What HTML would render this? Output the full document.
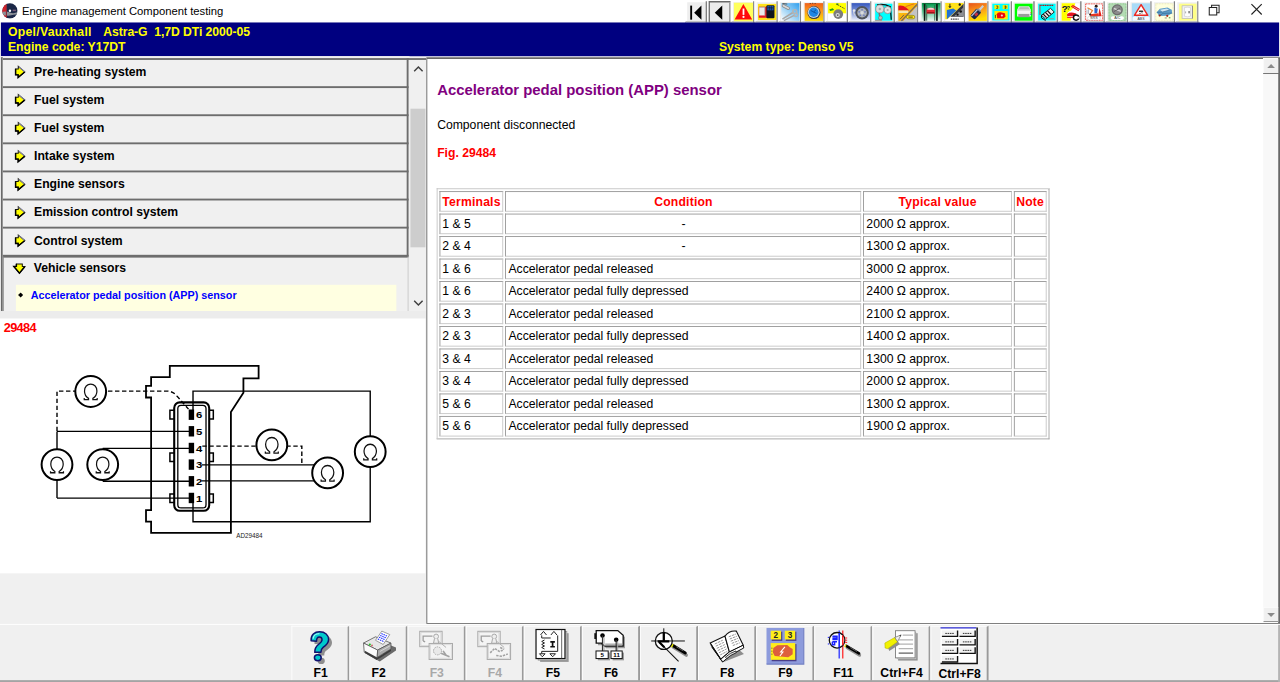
<!DOCTYPE html>
<html>
<head>
<meta charset="utf-8">
<title>Engine management Component testing</title>
<style>
*{box-sizing:border-box;margin:0;padding:0}
html,body{width:1280px;height:682px;overflow:hidden;background:#f0f0f0;font-family:"Liberation Sans",sans-serif}
#app{position:absolute;left:0;top:0;width:1366px;height:728px;transform:scale(0.93704,0.93681);transform-origin:0 0;background:#f0f0f0;overflow:hidden}
.abs{position:absolute}
#titlebar{left:0;top:0;width:1366px;height:24px;background:#fff}
#title{left:23.5px;top:4.5px;font-size:12px;color:#000;white-space:pre}
#navy{left:1px;top:23.7px;width:1363.5px;height:36px;background:#000080}
.hd{color:#ffff00;font-weight:bold;font-size:13px;white-space:pre;line-height:16px}
#acc{left:0;top:60px;width:437px;height:273px;background:#f0f0f0}
.item{position:absolute;left:2.8px;width:433.2px;height:30px;background:#f0f0f0;border-top:2.2px solid #6d6d6d}
.item span{position:absolute;left:33.5px;top:4.7px;font-size:13px;font-weight:bold;color:#000;white-space:pre;line-height:16px}
.item svg{position:absolute;left:12.3px;top:5.3px}
#pane{left:454.6px;top:61px;width:911.4px;height:605px;background:#fff;border-top:2px solid #696969;border-left:1.3px solid #696969;border-bottom:1.5px solid #696969;border-right:2.5px solid #696969}
#h1{left:466.5px;top:86.5px;font-size:15.9px;font-weight:bold;color:#800080;white-space:pre}
#p1{left:466.5px;top:126px;font-size:13px;color:#000;white-space:pre}
#p2{left:466.5px;top:156px;font-size:13px;font-weight:bold;color:#ff0000;white-space:pre}
table#t{position:absolute;left:465.9px;top:200.8px;border-collapse:separate;border-spacing:2px;border:1px solid;border-color:#c6c6c6 #a6a6a6 #a6a6a6 #c6c6c6;table-layout:fixed;width:654px;font-size:13px;background:#fff}
#t td,#t th{height:22px;border:1px solid;border-color:#9a9a9a #c8c8c8 #c8c8c8 #9a9a9a;padding:1.4px 0 0 2.2px;line-height:18.6px;white-space:pre;overflow:hidden;text-align:left;font-weight:normal;color:#000}
#t th{color:#ff0000;font-weight:bold;text-align:center;padding:2px 0 0 0;line-height:18px;letter-spacing:0.2px}
#t td.c{text-align:center;padding:1.4px 0 0 0}
#bt{left:0;top:665.5px;width:1366px;height:63px;background:#f0f0f0;border-top:1.2px solid #ffffff}
.fb{position:absolute;top:1.5px;width:62px;height:61px;border-left:1.5px solid #fdfdfd;border-top:1.5px solid #fdfdfd;border-right:2px solid #9a9a9a;border-bottom:2px solid #9a9a9a;background:#f0f0f0}
.fb b{position:absolute;left:0.6px;width:59px;top:41.5px;text-align:center;font-size:13px;color:#000;line-height:16px;white-space:pre}
.fb.dis b{color:#a8a8a8}
.fb svg{position:absolute;left:12.5px;top:4.5px}
.tb{position:absolute;top:1.3px;width:22px;height:22.5px}
</style>
</head>
<body>
<div id="app">
<div id="titlebar" class="abs">
  <svg class="abs" style="left:1.6px;top:2.6px" width="17.2" height="17.2" viewBox="0 0 17 17">
    <defs><clipPath id="apc"><circle cx="8.5" cy="8.5" r="8"/></clipPath></defs>
    <circle cx="8.5" cy="8.5" r="8" fill="#1b2747"/>
    <g clip-path="url(#apc)"><rect x="0" y="0" width="5" height="17" fill="#d4222a"/>
    <path d="M0 9.6Q5 8.6 8.5 10.2T17 9.8V12.2Q12 12.8 8.5 13.4T0 12.2Z" fill="#8c9198"/>
    <path d="M4.2 0L5.4 0V17H4.2Z" fill="#8a2a3a"/></g>
    <circle cx="8.5" cy="8.3" r="1.3" fill="#ffffff"/><rect x="11.4" y="7.2" width="3.4" height="1.6" fill="#7a5a78"/>
  </svg>
  <div id="title" class="abs">Engine management Component testing</div>
  <svg width="0" height="0" style="position:absolute"><defs>
<linearGradient id="gWr" x1="1" y1="0" x2="0" y2="1"><stop offset="0" stop-color="#2f9fee"/><stop offset="0.55" stop-color="#9fd4f6"/><stop offset="1" stop-color="#ffffff"/></linearGradient>
<linearGradient id="gOr" x1="0" y1="0" x2="0" y2="1"><stop offset="0" stop-color="#f0601a"/><stop offset="0.55" stop-color="#fba51a"/><stop offset="1" stop-color="#ffdc00"/></linearGradient>
<linearGradient id="gBl" x1="0" y1="0" x2="0" y2="1"><stop offset="0" stop-color="#3456bd"/><stop offset="0.6" stop-color="#95a8e0"/><stop offset="1" stop-color="#f2f4fb"/></linearGradient>
<linearGradient id="gGr" x1="0" y1="0" x2="0" y2="1"><stop offset="0" stop-color="#009c4c"/><stop offset="0.5" stop-color="#6cc99a"/><stop offset="1" stop-color="#eefaf3"/></linearGradient>
<linearGradient id="gYo" x1="0" y1="0" x2="1" y2="1"><stop offset="0" stop-color="#ffd800"/><stop offset="1" stop-color="#f58a1a"/></linearGradient>
<linearGradient id="gKey" x1="0" y1="0" x2="0.3" y2="1"><stop offset="0" stop-color="#e8501a"/><stop offset="0.6" stop-color="#fba51a"/><stop offset="1" stop-color="#ffde00"/></linearGradient>
</defs></svg><div class="abs" style="left:731px;top:23.4px;width:549px;height:1.3px;background:#b8b8c4"></div><svg class="tb" style="left:732.30px;width:22.6px;height:23.4px" width="22.6" height="23.4" viewBox="0 0 22.6 23.4" font-family="Liberation Sans, sans-serif"><rect x="0" y="0" width="22.6" height="23.4" fill="#eeeeee"/><path d="M0.7 23.4V0.6H22.6" fill="none" stroke="#ffffff" stroke-width="1.4"/><path d="M0 22.4H22.6" stroke="#c2c2c2" stroke-width="2"/><path d="M21.85 0.4V23.4" stroke="#828282" stroke-width="1.5"/><rect x="4.6" y="5" width="2" height="15" fill="#000"/><path d="M8.8 12.5L16.6 5V20Z" fill="#000"/></svg><svg class="tb" style="left:756.20px;width:23.6px;height:23.4px" width="23.6" height="23.4" viewBox="0 0 23.6 23.4" font-family="Liberation Sans, sans-serif"><rect x="0" y="0" width="23.6" height="23.4" fill="#ececec"/><path d="M0.8 23.4V0.8H23.6" fill="none" stroke="#6a6a6a" stroke-width="1.6"/><path d="M22.900000000000002 1.6V22.7H1.6" fill="none" stroke="#8c8c8c" stroke-width="1.4"/><path d="M6.8 12.5L14.8 5V20Z" fill="#000"/></svg><svg class="tb" style="left:781.30px;width:24.2px;height:23.4px" width="24.2" height="23.4" viewBox="0 0 24.2 23.4" font-family="Liberation Sans, sans-serif"><rect x="0" y="0" width="24.2" height="23.4" fill="#eeeeee"/><path d="M0.7 23.4V0.6H24.2" fill="none" stroke="#ffffff" stroke-width="1.4"/><path d="M0 22.4H24.2" stroke="#c2c2c2" stroke-width="2"/><path d="M23.45 0.4V23.4" stroke="#828282" stroke-width="1.5"/><g transform="translate(1.9 1.5) scale(1.045 1.03)"><rect x="0.3" y="0.4" width="19.5" height="19.2" fill="#ffff5c"/><path d="M10 1.6L19 17.8H1Z" fill="#ff0a0a"/><rect x="9.2" y="6.4" width="1.8" height="6.6" fill="#fff"/><circle cx="10.1" cy="15.1" r="1.1" fill="#fff"/></g></svg><svg class="tb" style="left:806.23px;width:24.2px;height:23.4px" width="24.2" height="23.4" viewBox="0 0 24.2 23.4" font-family="Liberation Sans, sans-serif"><rect x="0" y="0" width="24.2" height="23.4" fill="#eeeeee"/><path d="M0.7 23.4V0.6H24.2" fill="none" stroke="#ffffff" stroke-width="1.4"/><path d="M0 22.4H24.2" stroke="#c2c2c2" stroke-width="2"/><path d="M23.45 0.4V23.4" stroke="#828282" stroke-width="1.5"/><g transform="translate(1.9 1.5) scale(1.045 1.03)"><rect x="1" y="1.6" width="18.6" height="16.8" fill="#ffe21a"/><path d="M1.8 4.5H12L13 16H1.8Z" fill="#e31b23"/><rect x="2.2" y="5" width="5.8" height="8.6" fill="#ececec"/><path d="M2.2 5H8V13.6" fill="none" stroke="#9a9a9a" stroke-width="0.7"/><rect x="9.6" y="3" width="8.2" height="13.4" rx="1" fill="#10151f"/><rect x="10.6" y="4" width="6.2" height="4.2" fill="#1f62d6"/><path d="M10.6 5.4H16.8M10.6 6.8H16.8M12.6 4V8.2M14.7 4V8.2" stroke="#10151f" stroke-width="0.6"/></g></svg><svg class="tb" style="left:831.16px;width:24.2px;height:23.4px" width="24.2" height="23.4" viewBox="0 0 24.2 23.4" font-family="Liberation Sans, sans-serif"><rect x="0" y="0" width="24.2" height="23.4" fill="#eeeeee"/><path d="M0.7 23.4V0.6H24.2" fill="none" stroke="#ffffff" stroke-width="1.4"/><path d="M0 22.4H24.2" stroke="#c2c2c2" stroke-width="2"/><path d="M23.45 0.4V23.4" stroke="#828282" stroke-width="1.5"/><g transform="translate(1.9 1.5) scale(1.045 1.03)"><rect x="0.8" y="0.8" width="18.6" height="18.4" fill="url(#gWr)"/><path d="M3 3.5L8 6.2" stroke="#8a8a8a" stroke-width="3.4" stroke-linecap="round"/><path d="M3 3.5L8 6.2" stroke="#d8d8d8" stroke-width="1.8" stroke-linecap="round"/><path d="M2 17.5L13.5 10M3.5 19L15 13" stroke="#a8a8a8" stroke-width="1.6"/><circle cx="14.6" cy="9.6" r="2.1" fill="none" stroke="#b4b4b4" stroke-width="1.4"/><circle cx="15.8" cy="13" r="1.8" fill="none" stroke="#b4b4b4" stroke-width="1.3"/><path d="M2 1.2L7 1.8" stroke="#555" stroke-width="1"/></g></svg><svg class="tb" style="left:856.09px;width:24.2px;height:23.4px" width="24.2" height="23.4" viewBox="0 0 24.2 23.4" font-family="Liberation Sans, sans-serif"><rect x="0" y="0" width="24.2" height="23.4" fill="#eeeeee"/><path d="M0.7 23.4V0.6H24.2" fill="none" stroke="#ffffff" stroke-width="1.4"/><path d="M0 22.4H24.2" stroke="#c2c2c2" stroke-width="2"/><path d="M23.45 0.4V23.4" stroke="#828282" stroke-width="1.5"/><g transform="translate(1.9 1.5) scale(1.045 1.03)"><rect x="0.8" y="0.8" width="18.8" height="18.4" fill="url(#gOr)"/><circle cx="10.3" cy="10.6" r="6.7" fill="#3a3f48"/><circle cx="10" cy="10.3" r="6" fill="#c9d2dc"/><circle cx="10" cy="10.3" r="4.9" fill="#1f86e4"/><path d="M7 8.5L13 11.5M10 10L12.5 7.5" stroke="#0c4f9c" stroke-width="0.9"/><path d="M6 1.2h1M8.5 1h1M11 1.2h1" stroke="#222" stroke-width="0.7"/></g></svg><svg class="tb" style="left:881.02px;width:24.2px;height:23.4px" width="24.2" height="23.4" viewBox="0 0 24.2 23.4" font-family="Liberation Sans, sans-serif"><rect x="0" y="0" width="24.2" height="23.4" fill="#eeeeee"/><path d="M0.7 23.4V0.6H24.2" fill="none" stroke="#ffffff" stroke-width="1.4"/><path d="M0 22.4H24.2" stroke="#c2c2c2" stroke-width="2"/><path d="M23.45 0.4V23.4" stroke="#828282" stroke-width="1.5"/><g transform="translate(1.9 1.5) scale(1.045 1.03)"><rect x="0.8" y="0.8" width="18.4" height="18.4" fill="#fff"/><rect x="0.8" y="0.8" width="18.4" height="10.6" fill="#ffff00"/><circle cx="11.2" cy="12.2" r="5" fill="#7d7d7d"/><circle cx="10.6" cy="13.2" r="2.2" fill="#d9d9d9"/><circle cx="10.6" cy="13.2" r="0.9" fill="#555"/><path d="M2 7.5L5.5 6L7 8L3 9Z" fill="#1d9a1d"/><path d="M9.5 2L17.5 6.5" stroke="#333" stroke-width="0.9" stroke-dasharray="1.2 0.8"/><rect x="9.3" y="1.2" width="2" height="1.4" fill="#1d7a1d"/></g></svg><svg class="tb" style="left:905.95px;width:24.2px;height:23.4px" width="24.2" height="23.4" viewBox="0 0 24.2 23.4" font-family="Liberation Sans, sans-serif"><rect x="0" y="0" width="24.2" height="23.4" fill="#eeeeee"/><path d="M0.7 23.4V0.6H24.2" fill="none" stroke="#ffffff" stroke-width="1.4"/><path d="M0 22.4H24.2" stroke="#c2c2c2" stroke-width="2"/><path d="M23.45 0.4V23.4" stroke="#828282" stroke-width="1.5"/><g transform="translate(1.9 1.5) scale(1.045 1.03)"><rect x="0.8" y="0.8" width="18.8" height="18.4" fill="url(#gBl)"/><circle cx="11.6" cy="10.8" r="6.9" fill="#50545c"/><circle cx="11.6" cy="10.8" r="4.9" fill="#aeb3bb"/><circle cx="11.6" cy="10.8" r="1.7" fill="#d8dbe0"/><g fill="#6d7ec0"><circle cx="11.6" cy="7.6" r="0.9"/><circle cx="14.6" cy="9.8" r="0.9"/><circle cx="13.5" cy="13.4" r="0.9"/><circle cx="9.7" cy="13.4" r="0.9"/><circle cx="8.6" cy="9.8" r="0.9"/></g><path d="M3.5 8Q2 11 4.5 13.5" fill="none" stroke="#cfd3da" stroke-width="1.1"/><circle cx="3.4" cy="8.4" r="1.3" fill="#e4e6ea"/></g></svg><svg class="tb" style="left:930.88px;width:24.2px;height:23.4px" width="24.2" height="23.4" viewBox="0 0 24.2 23.4" font-family="Liberation Sans, sans-serif"><rect x="0" y="0" width="24.2" height="23.4" fill="#eeeeee"/><path d="M0.7 23.4V0.6H24.2" fill="none" stroke="#ffffff" stroke-width="1.4"/><path d="M0 22.4H24.2" stroke="#c2c2c2" stroke-width="2"/><path d="M23.45 0.4V23.4" stroke="#828282" stroke-width="1.5"/><g transform="translate(1.9 1.5) scale(1.045 1.03)"><rect x="1" y="1.4" width="17.6" height="17.6" fill="#00ffff"/><path d="M3 2.5Q10 1 16.5 4.5L17.5 18" fill="none" stroke="#111" stroke-width="1.3"/><circle cx="5.8" cy="6.8" r="4.2" fill="#dcdcdc" stroke="#8a8a8a" stroke-width="0.8"/><circle cx="13.8" cy="8" r="3.7" fill="#e4e4e4" stroke="#8a8a8a" stroke-width="0.8"/><circle cx="5.8" cy="6.8" r="1.3" fill="#aaa"/><circle cx="13.8" cy="8" r="1.1" fill="#aaa"/><path d="M5 11L6.5 17" stroke="#777" stroke-width="1.6"/><circle cx="6.4" cy="16" r="2" fill="#bdbdbd" stroke="#666" stroke-width="0.6"/><path d="M1 18.6H8" stroke="#e06a5a" stroke-width="0.8"/></g></svg><svg class="tb" style="left:955.81px;width:24.2px;height:23.4px" width="24.2" height="23.4" viewBox="0 0 24.2 23.4" font-family="Liberation Sans, sans-serif"><rect x="0" y="0" width="24.2" height="23.4" fill="#eeeeee"/><path d="M0.7 23.4V0.6H24.2" fill="none" stroke="#ffffff" stroke-width="1.4"/><path d="M0 22.4H24.2" stroke="#c2c2c2" stroke-width="2"/><path d="M23.45 0.4V23.4" stroke="#828282" stroke-width="1.5"/><g transform="translate(1.9 1.5) scale(1.045 1.03)"><rect x="0.8" y="0.8" width="19" height="18.4" fill="#c4c4c4"/><path d="M0.8 0.8H19.8V4L6 19.2H0.8Z" fill="url(#gYo)"/><path d="M0.8 3.5Q5 2.5 9 5.5L12 8.5H0.8Z" fill="#e3141e"/><path d="M0.8 8.5H11V11H0.8Z" fill="#f4e6b0"/><path d="M4 19.2L19.8 2" stroke="#666" stroke-width="1.2"/><path d="M8 4.5L17 1.5" stroke="#e05a1a" stroke-width="0.8"/><rect x="9" y="13.5" width="8.6" height="3.6" rx="1.8" fill="#ffe81a" stroke="#776a00" stroke-width="0.6"/><path d="M11 15.3h4.5" stroke="#554c00" stroke-width="1"/><path d="M2.5 17.5L6.5 13" stroke="#555" stroke-width="0.9"/></g></svg><svg class="tb" style="left:980.74px;width:24.2px;height:23.4px" width="24.2" height="23.4" viewBox="0 0 24.2 23.4" font-family="Liberation Sans, sans-serif"><rect x="0" y="0" width="24.2" height="23.4" fill="#eeeeee"/><path d="M0.7 23.4V0.6H24.2" fill="none" stroke="#ffffff" stroke-width="1.4"/><path d="M0 22.4H24.2" stroke="#c2c2c2" stroke-width="2"/><path d="M23.45 0.4V23.4" stroke="#828282" stroke-width="1.5"/><g transform="translate(1.9 1.5) scale(1.045 1.03)"><rect x="0.8" y="0.8" width="19" height="18.4" fill="url(#gGr)"/><rect x="2.8" y="1.2" width="1.7" height="18" fill="#0b1a10"/><rect x="15.4" y="1.2" width="1.7" height="18" fill="#0b1a10"/><rect x="5.4" y="3" width="0.9" height="16" fill="#2a5a3e"/><rect x="13.6" y="3" width="0.9" height="16" fill="#2a5a3e"/><path d="M5.6 7.2Q10 4.2 14.4 7.2V11.6H5.6Z" fill="#e62a34"/><path d="M6.4 6.6Q10 4.6 13.6 6.6L13.4 7.6H6.6Z" fill="#f6d8da"/><rect x="6.2" y="10.2" width="7.6" height="1.2" fill="#8a1118"/><rect x="1.6" y="0.8" width="17.4" height="1" fill="#0b6c38"/></g></svg><svg class="tb" style="left:1005.67px;width:24.2px;height:23.4px" width="24.2" height="23.4" viewBox="0 0 24.2 23.4" font-family="Liberation Sans, sans-serif"><rect x="0" y="0" width="24.2" height="23.4" fill="#eeeeee"/><path d="M0.7 23.4V0.6H24.2" fill="none" stroke="#ffffff" stroke-width="1.4"/><path d="M0 22.4H24.2" stroke="#c2c2c2" stroke-width="2"/><path d="M23.45 0.4V23.4" stroke="#828282" stroke-width="1.5"/><g transform="translate(1.9 1.5) scale(1.045 1.03)"><rect x="0.8" y="0.8" width="18.8" height="18.4" fill="#fff"/><path d="M0.8 0.8H19.6V2L3 17.5H0.8Z" fill="#ffe21a"/><path d="M2.5 8L9 6.5L12 8.5L2.5 17.5Z" fill="#2272d4"/><path d="M19.6 1.5V15H6Z" fill="#33363c"/><path d="M19.6 5L10 14.5H19.6Z" fill="#8c8f95"/><circle cx="16.6" cy="9.6" r="1.3" fill="#111"/><circle cx="13.4" cy="12.8" r="1.2" fill="#111"/><path d="M5.6 1.5V5M4.6 4L5.6 5.6L6.6 4M15.6 1.2V3" stroke="#111" stroke-width="0.9" fill="none"/><circle cx="15.6" cy="2.4" r="1.2" fill="#111"/><path d="M6.5 17.4h8" stroke="#444" stroke-width="1.4" stroke-dasharray="1.6 0.7"/></g></svg><svg class="tb" style="left:1030.60px;width:24.2px;height:23.4px" width="24.2" height="23.4" viewBox="0 0 24.2 23.4" font-family="Liberation Sans, sans-serif"><rect x="0" y="0" width="24.2" height="23.4" fill="#eeeeee"/><path d="M0.7 23.4V0.6H24.2" fill="none" stroke="#ffffff" stroke-width="1.4"/><path d="M0 22.4H24.2" stroke="#c2c2c2" stroke-width="2"/><path d="M23.45 0.4V23.4" stroke="#828282" stroke-width="1.5"/><g transform="translate(1.9 1.5) scale(1.045 1.03)"><rect x="0.8" y="0.8" width="18.6" height="18.4" fill="url(#gKey)"/><g transform="rotate(-48 9 11)"><rect x="2.4" y="7.8" width="10.4" height="6.4" rx="1.6" fill="#1b2748"/><rect x="3" y="8.6" width="9.2" height="1.3" fill="#b8c0d0"/><rect x="12.8" y="9.9" width="6.2" height="2.2" fill="#c9ced6"/><rect x="6" y="10.4" width="3.4" height="2.6" fill="#c73040"/><rect x="12" y="9" width="1.6" height="4" fill="#8d95a6"/></g></g></svg><svg class="tb" style="left:1055.53px;width:24.2px;height:23.4px" width="24.2" height="23.4" viewBox="0 0 24.2 23.4" font-family="Liberation Sans, sans-serif"><rect x="0" y="0" width="24.2" height="23.4" fill="#eeeeee"/><path d="M0.7 23.4V0.6H24.2" fill="none" stroke="#ffffff" stroke-width="1.4"/><path d="M0 22.4H24.2" stroke="#c2c2c2" stroke-width="2"/><path d="M23.45 0.4V23.4" stroke="#828282" stroke-width="1.5"/><g transform="translate(1.9 1.5) scale(1.045 1.03)"><rect x="1" y="1.4" width="17.6" height="17.4" fill="#00ffff"/><rect x="3.2" y="2.8" width="5.2" height="4.2" fill="#ffee00"/><rect x="11.6" y="2.8" width="5.2" height="4.2" fill="#ffee00"/><path d="M5 3.8h1.6v2.4h-1.6M13.6 3.8h1.4v1.1h-1.4M15 4.9v1.3h-1.4" stroke="#222" stroke-width="0.7" fill="none"/><rect x="3.2" y="9" width="13.6" height="8.8" fill="#ffee00"/><path d="M5.6 12.4Q6 10.2 9.4 10.4L13.8 11.4L14.6 14.8L12.6 16.6H6Z" fill="#ee0a0a"/><circle cx="10.8" cy="13.6" r="1.1" fill="#f7d0d0"/><path d="M4.2 13v3.4" stroke="#222" stroke-width="0.8"/></g></svg><svg class="tb" style="left:1080.46px;width:24.2px;height:23.4px" width="24.2" height="23.4" viewBox="0 0 24.2 23.4" font-family="Liberation Sans, sans-serif"><rect x="0" y="0" width="24.2" height="23.4" fill="#eeeeee"/><path d="M0.7 23.4V0.6H24.2" fill="none" stroke="#ffffff" stroke-width="1.4"/><path d="M0 22.4H24.2" stroke="#c2c2c2" stroke-width="2"/><path d="M23.45 0.4V23.4" stroke="#828282" stroke-width="1.5"/><g transform="translate(1.9 1.5) scale(1.045 1.03)"><rect x="1" y="1.4" width="18.2" height="17.6" fill="#00ff00"/><path d="M5.2 4.2H15.6L17.4 8V14.6H3.4V8Z" fill="#f4f4f4"/><path d="M5.2 4.2H15.6L17.4 8H3.4Z" fill="#dadada"/><path d="M6 5.2h9M5.6 6.4h10" stroke="#a8a8a8" stroke-width="0.7"/><rect x="4.6" y="12" width="11.4" height="3.4" fill="#9c9c9c"/><path d="M3.4 8H17.4" stroke="#bdbdbd" stroke-width="0.7"/><rect x="17" y="10.4" width="1.2" height="0.9" fill="#e02020"/><rect x="17" y="12" width="1.2" height="0.9" fill="#2030d0"/></g></svg><svg class="tb" style="left:1105.39px;width:24.2px;height:23.4px" width="24.2" height="23.4" viewBox="0 0 24.2 23.4" font-family="Liberation Sans, sans-serif"><rect x="0" y="0" width="24.2" height="23.4" fill="#eeeeee"/><path d="M0.7 23.4V0.6H24.2" fill="none" stroke="#ffffff" stroke-width="1.4"/><path d="M0 22.4H24.2" stroke="#c2c2c2" stroke-width="2"/><path d="M23.45 0.4V23.4" stroke="#828282" stroke-width="1.5"/><g transform="translate(1.9 1.5) scale(1.045 1.03)"><rect x="1" y="1.4" width="17.8" height="17.4" fill="#00ffff"/><path d="M2.4 3.2h14" stroke="#b01818" stroke-width="1.3" stroke-dasharray="1.3 0.5"/><path d="M2.8 3.6V13" stroke="#e02020" stroke-width="0.9"/><path d="M4.4 13.4L13.6 6.2L17.4 10L8.6 17.4Z" fill="#f2f2f2" stroke="#111" stroke-width="0.9"/><path d="M6.2 12.2L9.6 15.8M8.4 10.4L11.8 14M10.6 8.8L14 12.4" stroke="#111" stroke-width="1.3"/><path d="M4.4 13.4V16L8.6 19" stroke="#111" stroke-width="1" fill="none"/><path d="M12.4 17h4.6" stroke="#e06a5a" stroke-width="0.7"/></g></svg><svg class="tb" style="left:1130.32px;width:24.2px;height:23.4px" width="24.2" height="23.4" viewBox="0 0 24.2 23.4" font-family="Liberation Sans, sans-serif"><rect x="0" y="0" width="24.2" height="23.4" fill="#eeeeee"/><path d="M0.7 23.4V0.6H24.2" fill="none" stroke="#ffffff" stroke-width="1.4"/><path d="M0 22.4H24.2" stroke="#c2c2c2" stroke-width="2"/><path d="M23.45 0.4V23.4" stroke="#828282" stroke-width="1.5"/><g transform="translate(1.9 1.5) scale(1.045 1.03)"><rect x="1" y="1" width="18.4" height="18.2" fill="#fff"/><path d="M1 1H15L10 19.2H1Z" fill="#ffff00"/><path d="M6.4 12.8Q7 9.6 10.4 8.6L14 4.4L19.4 8.4V15.6H7Z" fill="#fff"/><path d="M10.8 4L18.6 8.8M12 3L19.4 7.4" stroke="#e3141e" stroke-width="1.1"/><path d="M6.6 12.2Q9 10.2 13 10.8L16 11.6V14.4H6.6Z" fill="#e3141e"/><path d="M6.6 15.6h7" stroke="#e3141e" stroke-width="1"/><text x="1.2" y="9.6" font-size="10" font-weight="bold" fill="#0a0a3c">?</text><text x="6.2" y="8.2" font-size="5.4" font-weight="bold" fill="#0a0a3c">?</text><circle cx="15.8" cy="15.8" r="2.7" fill="#fff" stroke="#111" stroke-width="1.5"/><rect x="16.6" y="14.9" width="2.4" height="1.8" fill="#fff"/></g></svg><svg class="tb" style="left:1155.25px;width:24.2px;height:23.4px" width="24.2" height="23.4" viewBox="0 0 24.2 23.4" font-family="Liberation Sans, sans-serif"><rect x="0" y="0" width="24.2" height="23.4" fill="#eeeeee"/><path d="M0.7 23.4V0.6H24.2" fill="none" stroke="#ffffff" stroke-width="1.4"/><path d="M0 22.4H24.2" stroke="#c2c2c2" stroke-width="2"/><path d="M23.45 0.4V23.4" stroke="#828282" stroke-width="1.5"/><g transform="translate(1.9 1.5) scale(1.045 1.03)"><rect x="1" y="1" width="18.6" height="18.2" fill="#fff"/><path d="M1.6 1.6H19V18.6H1.6Z" fill="none" stroke="#e2352c" stroke-width="0.8" stroke-dasharray="2 0.6"/><path d="M16.4 1.6Q15 6 16.6 9L18 14.4H14.4Z" fill="#e2241c"/><path d="M6 12.4L14.4 11.4L15.4 14.6H6.4Z" fill="#e6331f"/><path d="M10.6 5.4L14 6.6L13.4 11.4H10.6Z" fill="#2a64c8"/><circle cx="12.4" cy="4" r="1.5" fill="#2b1c16"/><path d="M3.4 5.6L8.6 8.4L6 12.6" fill="none" stroke="#e8843a" stroke-width="1.3"/><path d="M3 7.6V12.4M4.6 6.8V12" stroke="#9aa3b5" stroke-width="0.8"/><circle cx="6.2" cy="12.6" r="1.1" fill="#222"/><rect x="3.6" y="14.6" width="13" height="3.8" rx="1.9" fill="#fff" stroke="#b9b9b9" stroke-width="0.5"/><text x="10.1" y="17.7" font-size="3.8" text-anchor="middle" fill="#333">SRS</text></g></svg><svg class="tb" style="left:1180.18px;width:24.2px;height:23.4px" width="24.2" height="23.4" viewBox="0 0 24.2 23.4" font-family="Liberation Sans, sans-serif"><rect x="0" y="0" width="24.2" height="23.4" fill="#eeeeee"/><path d="M0.7 23.4V0.6H24.2" fill="none" stroke="#ffffff" stroke-width="1.4"/><path d="M0 22.4H24.2" stroke="#c2c2c2" stroke-width="2"/><path d="M23.45 0.4V23.4" stroke="#828282" stroke-width="1.5"/><g transform="translate(1.9 1.5) scale(1.045 1.03)"><rect x="1" y="1" width="18.4" height="18.2" fill="#b4dcb4"/><rect x="1.6" y="1.6" width="17.2" height="17" fill="none" stroke="#86c486" stroke-width="1" stroke-dasharray="0.8 0.8"/><circle cx="10" cy="7.8" r="5.7" fill="#6e6e6e"/><circle cx="10" cy="7.8" r="4.4" fill="#8c8c8c"/><path d="M6.6 6.2L13.6 9.4" stroke="#d5d5d5" stroke-width="1.4"/><path d="M6.6 9.6L13 5.8" stroke="#5c5c5c" stroke-width="0.9"/><rect x="3.4" y="14.4" width="13.4" height="3.8" rx="1.9" fill="#fff"/><text x="10.1" y="17.6" font-size="3.8" text-anchor="middle" fill="#333">A/C</text></g></svg><svg class="tb" style="left:1205.11px;width:24.2px;height:23.4px" width="24.2" height="23.4" viewBox="0 0 24.2 23.4" font-family="Liberation Sans, sans-serif"><rect x="0" y="0" width="24.2" height="23.4" fill="#eeeeee"/><path d="M0.7 23.4V0.6H24.2" fill="none" stroke="#ffffff" stroke-width="1.4"/><path d="M0 22.4H24.2" stroke="#c2c2c2" stroke-width="2"/><path d="M23.45 0.4V23.4" stroke="#828282" stroke-width="1.5"/><g transform="translate(1.9 1.5) scale(1.045 1.03)"><rect x="1" y="1" width="18.6" height="18.2" fill="#a9dbf7"/><path d="M10.4 2.4L17.2 13.4H3.6Z" fill="#fff" stroke="#ea2a22" stroke-width="1.5" stroke-linejoin="round"/><path d="M8.6 8.4h3.4l0.8 1.6H8Z" fill="#333"/><path d="M8.2 11.2q1 1.2 2 0t2 0" stroke="#555" stroke-width="0.7" fill="none"/><path d="M1.6 19.2V15.6Q4 13.6 6 15Q10 13.4 14 15Q17 13.8 19.2 15.6V19.2Z" fill="#f4fafe"/><text x="10.3" y="18.2" font-size="3.6" text-anchor="middle" fill="#333">ABS</text></g></svg><svg class="tb" style="left:1230.04px;width:24.2px;height:23.4px" width="24.2" height="23.4" viewBox="0 0 24.2 23.4" font-family="Liberation Sans, sans-serif"><rect x="0" y="0" width="24.2" height="23.4" fill="#eeeeee"/><path d="M0.7 23.4V0.6H24.2" fill="none" stroke="#ffffff" stroke-width="1.4"/><path d="M0 22.4H24.2" stroke="#c2c2c2" stroke-width="2"/><path d="M23.45 0.4V23.4" stroke="#828282" stroke-width="1.5"/><g transform="translate(1.9 1.5) scale(1.045 1.03)"><rect x="1" y="1" width="18.6" height="18.2" fill="#ffffdc"/><rect x="1.5" y="1.5" width="17.6" height="17.2" fill="none" stroke="#d8d8a8" stroke-width="0.7" stroke-dasharray="0.8 0.8"/><path d="M2.4 10.4L5.6 6.6L13.4 5.4L17.8 7.8L18.2 11.2L13.6 14L5 14.2Z" fill="#5d9cc8"/><path d="M5.8 7.6L12.8 6.4L15.6 8L8.4 10Z" fill="#cfe6f4"/><path d="M2.4 10.4L8.4 10L15.6 8M5 14.2L8.8 11.4L18.2 11.2" stroke="#2a5f88" stroke-width="0.6" fill="none"/><circle cx="5.4" cy="13.6" r="1.1" fill="#a82818"/><circle cx="13.2" cy="14" r="1.1" fill="#a82818"/><rect x="14.8" y="15.6" width="1.6" height="0.9" fill="#1c8a1c"/><path d="M10.6 16.2h2.2" stroke="#666" stroke-width="0.7"/></g></svg><svg class="tb" style="left:1254.97px;width:24.2px;height:23.4px" width="24.2" height="23.4" viewBox="0 0 24.2 23.4" font-family="Liberation Sans, sans-serif"><rect x="0" y="0" width="24.2" height="23.4" fill="#eeeeee"/><path d="M0.7 23.4V0.6H24.2" fill="none" stroke="#ffffff" stroke-width="1.4"/><path d="M0 22.4H24.2" stroke="#c2c2c2" stroke-width="2"/><path d="M23.45 0.4V23.4" stroke="#828282" stroke-width="1.5"/><g transform="translate(1.9 1.5) scale(1.045 1.03)"><rect x="1.4" y="1.4" width="17.8" height="17.6" fill="#ffff86"/><rect x="4.4" y="3.6" width="10.6" height="13.2" fill="#f3f3f3" stroke="#b4b4b4" stroke-width="0.7"/><path d="M6.8 5.4Q10 4.6 13 5.4V14.4Q10 15.6 6.8 14.4Z" fill="#fdfdfd" stroke="#c4c4c4" stroke-width="0.6"/><rect x="11" y="9" width="1.1" height="2.4" fill="#444"/><path d="M8 9.4v2" stroke="#888" stroke-width="0.7"/><path d="M15 3.6V16.8" stroke="#8a8a8a" stroke-width="1"/></g></svg>
  <svg class="abs" style="left:1289px;top:4px" width="14" height="14" viewBox="0 0 14 14" fill="none" stroke="#222" stroke-width="1.1"><rect x="1.5" y="4" width="8" height="8"/><path d="M4 4V1.5h8v8H9.5"/></svg>
  <svg class="abs" style="left:1334px;top:3px" width="14" height="14" viewBox="0 0 14 14" fill="none" stroke="#222" stroke-width="1.2"><path d="M1.5 1.5l11 11M12.5 1.5l-11 11"/></svg>
</div>
<div id="navy" class="abs">
  <div class="abs hd" style="left:7.5px;top:2.8px;letter-spacing:0.32px">Opel/Vauxhall</div>
  <div class="abs hd" style="left:109.2px;top:2.8px;letter-spacing:-0.06px">Astra-G  1,7D DTi 2000-05</div>
  <div class="abs hd" style="left:7.5px;top:18.8px">Engine code: Y17DT</div>
  <div class="abs hd" style="left:766.2px;top:18.8px">System type: Denso V5</div>
</div>
<div id="acc" class="abs">
<div class="abs" style="left:1.3px;top:1px;width:1.6px;height:272px;background:#696969"></div>
<div class="item" style="top:1.9px"><svg width="14" height="16" viewBox="0 0 14 16"><path d="M1.7 4.7H4.5V1.9L11.5 7.75L4.5 13.6V10.8H1.7Z" fill="#ffff00" stroke="#16160a" stroke-width="1.1" stroke-linejoin="miter"/><path d="M1.6 4.4V10.9H4.3V13.7L11.3 7.9" fill="none" stroke="#000" stroke-width="1.5" stroke-linejoin="miter"/><path d="M4.9 2.2L11.2 7.5" stroke="#8a8aa8" stroke-width="1.1" fill="none"/></svg><span>Pre-heating system</span></div>
<div class="item" style="top:31.9px"><svg width="14" height="16" viewBox="0 0 14 16"><path d="M1.7 4.7H4.5V1.9L11.5 7.75L4.5 13.6V10.8H1.7Z" fill="#ffff00" stroke="#16160a" stroke-width="1.1" stroke-linejoin="miter"/><path d="M1.6 4.4V10.9H4.3V13.7L11.3 7.9" fill="none" stroke="#000" stroke-width="1.5" stroke-linejoin="miter"/><path d="M4.9 2.2L11.2 7.5" stroke="#8a8aa8" stroke-width="1.1" fill="none"/></svg><span>Fuel system</span></div>
<div class="item" style="top:61.9px"><svg width="14" height="16" viewBox="0 0 14 16"><path d="M1.7 4.7H4.5V1.9L11.5 7.75L4.5 13.6V10.8H1.7Z" fill="#ffff00" stroke="#16160a" stroke-width="1.1" stroke-linejoin="miter"/><path d="M1.6 4.4V10.9H4.3V13.7L11.3 7.9" fill="none" stroke="#000" stroke-width="1.5" stroke-linejoin="miter"/><path d="M4.9 2.2L11.2 7.5" stroke="#8a8aa8" stroke-width="1.1" fill="none"/></svg><span>Fuel system</span></div>
<div class="item" style="top:91.9px"><svg width="14" height="16" viewBox="0 0 14 16"><path d="M1.7 4.7H4.5V1.9L11.5 7.75L4.5 13.6V10.8H1.7Z" fill="#ffff00" stroke="#16160a" stroke-width="1.1" stroke-linejoin="miter"/><path d="M1.6 4.4V10.9H4.3V13.7L11.3 7.9" fill="none" stroke="#000" stroke-width="1.5" stroke-linejoin="miter"/><path d="M4.9 2.2L11.2 7.5" stroke="#8a8aa8" stroke-width="1.1" fill="none"/></svg><span>Intake system</span></div>
<div class="item" style="top:121.9px"><svg width="14" height="16" viewBox="0 0 14 16"><path d="M1.7 4.7H4.5V1.9L11.5 7.75L4.5 13.6V10.8H1.7Z" fill="#ffff00" stroke="#16160a" stroke-width="1.1" stroke-linejoin="miter"/><path d="M1.6 4.4V10.9H4.3V13.7L11.3 7.9" fill="none" stroke="#000" stroke-width="1.5" stroke-linejoin="miter"/><path d="M4.9 2.2L11.2 7.5" stroke="#8a8aa8" stroke-width="1.1" fill="none"/></svg><span>Engine sensors</span></div>
<div class="item" style="top:151.9px"><svg width="14" height="16" viewBox="0 0 14 16"><path d="M1.7 4.7H4.5V1.9L11.5 7.75L4.5 13.6V10.8H1.7Z" fill="#ffff00" stroke="#16160a" stroke-width="1.1" stroke-linejoin="miter"/><path d="M1.6 4.4V10.9H4.3V13.7L11.3 7.9" fill="none" stroke="#000" stroke-width="1.5" stroke-linejoin="miter"/><path d="M4.9 2.2L11.2 7.5" stroke="#8a8aa8" stroke-width="1.1" fill="none"/></svg><span>Emission control system</span></div>
<div class="item" style="top:181.9px"><svg width="14" height="16" viewBox="0 0 14 16"><path d="M1.7 4.7H4.5V1.9L11.5 7.75L4.5 13.6V10.8H1.7Z" fill="#ffff00" stroke="#16160a" stroke-width="1.1" stroke-linejoin="miter"/><path d="M1.6 4.4V10.9H4.3V13.7L11.3 7.9" fill="none" stroke="#000" stroke-width="1.5" stroke-linejoin="miter"/><path d="M4.9 2.2L11.2 7.5" stroke="#8a8aa8" stroke-width="1.1" fill="none"/></svg><span>Control system</span></div>
<div class="item" style="top:211.5px;height:61.5px;border-top:3.4px solid #6d6d6d;border-left:1.2px solid #8a8a8a;left:3.3px;width:432.7px"><svg style="left:8.9px;top:5.8px" width="16" height="14" viewBox="0 0 16 14"><path d="M4.7 1.7V4.5H1.9L7.75 11.5L13.6 4.5H10.8V1.7Z" fill="#ffff00" stroke="#16160a" stroke-width="1.1" stroke-linejoin="miter"/><path d="M4.4 1.6V4.3H1.7L7.75 11.6L13.4 4.8" fill="none" stroke="#000" stroke-width="1.5" stroke-linejoin="miter"/></svg><span style="left:31.8px;top:3.7px">Vehicle sensors</span>
<div class="abs" style="left:12.7px;top:29.3px;width:406.3px;height:29px;background:#ffffe1"></div>
<svg class="abs" style="left:14.6px;top:37.2px" width="6" height="6" viewBox="0 0 6 6"><path d="M3 0.3L5.7 3L3 5.7L0.3 3Z" fill="#000"/></svg>
<div class="abs" style="left:28.4px;top:33.3px;font-size:11.5px;font-weight:bold;color:#0000ff;white-space:pre;line-height:14px">Accelerator pedal position (APP) sensor</div>
</div>
<div class="abs" style="left:434.2px;top:1.9px;width:2px;height:212.5px;background:#6d6d6d"></div>
<div class="abs" style="left:434.6px;top:214px;width:1.3px;height:58px;background:#c9c9c9"></div>
</div>
<div class="abs" style="left:437px;top:61px;width:17.5px;height:271.5px;background:#f0f0f0">
  <div class="abs" style="left:-2px;top:0.9px;width:19.5px;height:2.2px;background:#6d6d6d"></div>
  <svg class="abs" style="left:3.5px;top:9.2px" width="11" height="7" viewBox="0 0 11 7" fill="none" stroke="#404040" stroke-width="1.6"><path d="M1 6L5.5 1.5L10 6"/></svg>
  <div class="abs" style="left:0.5px;top:54.5px;width:16.5px;height:148.5px;background:#cdcdcd"></div>
  <svg class="abs" style="left:3.5px;top:259px" width="11" height="7" viewBox="0 0 11 7" fill="none" stroke="#404040" stroke-width="1.6"><path d="M1 1L5.5 5.5L10 1"/></svg>
</div>
<div class="abs" style="left:0;top:332.3px;width:454.5px;height:8.2px;background:#ececec"></div>
<div id="img" class="abs" style="left:0;top:340.4px;width:453.8px;height:271.2px;background:#fff">
  <div class="abs" style="left:4px;top:2px;font-size:13.6px;font-weight:bold;color:#ff0000;line-height:15px;letter-spacing:-0.7px">29484</div>
  <svg class="abs" style="left:0;top:0" width="453.8" height="271.2" viewBox="0 318.4 425.2 254.1" font-family="Liberation Sans, sans-serif" fill="#000">
<g fill="none" stroke="#000" stroke-width="1.8" stroke-linejoin="miter">
<path d="M169.8 365.8H258.6V378.3H243.4V392.6L230.9 411.8V532.9H151.1V521.6H146V510H151.1V397.4H146V385.8H151.1V377H169.8Z"/>
<rect x="174.2" y="402.3" width="35" height="108.4" rx="5.5" stroke-width="2.1"/>
<rect x="177.8" y="405.2" width="28.2" height="102.6" rx="3.2" stroke-width="1.3"/>
<g stroke-width="1.5"><path d="M174 410.2H169.9V419H174M209.2 410.2H213.3V419H209.2"/><path d="M174 452.9H169.9V461.3H174M209.2 452.9H213.3V461.3H209.2"/><path d="M174 493.9H169.9V502.5H174M209.2 493.9H213.3V502.5H209.2"/></g>
</g>
<g fill="none" stroke="#000" stroke-width="1.4">
<path d="M57 431.3H189"/>
<path d="M102.7 448.3H189"/>
<path d="M102.7 481.2H189"/>
<path d="M57 498H189"/>
<path d="M57 431.3V498"/>
<path d="M193 410V391H370.2V521.6H193V503"/>
<path d="M201.5 464.8H314"/>
<path d="M201.5 480.8H314"/>
</g>
<g fill="none" stroke="#000" stroke-width="1.4" stroke-dasharray="4.4 2.6">
<path d="M57 431V391H167Q173 391 177 396L188.5 409"/>
<path d="M202.3 446H301.8V465"/>
</g>
<rect x="188.7" y="409.4" width="5.4" height="10.4" fill="#000"/><rect x="188.7" y="426.0" width="5.4" height="10.4" fill="#000"/><rect x="188.7" y="442.7" width="5.4" height="10.4" fill="#000"/><rect x="188.7" y="459.3" width="5.4" height="10.4" fill="#000"/><rect x="188.7" y="476.0" width="5.4" height="10.4" fill="#000"/><rect x="188.7" y="492.7" width="5.4" height="10.4" fill="#000"/>
<text x="196" y="418.2" font-size="9.8" font-weight="bold" textLength="6.3" lengthAdjust="spacingAndGlyphs">6</text><text x="196" y="434.8" font-size="9.8" font-weight="bold" textLength="6.3" lengthAdjust="spacingAndGlyphs">5</text><text x="196" y="451.5" font-size="9.8" font-weight="bold" textLength="6.3" lengthAdjust="spacingAndGlyphs">4</text><text x="196" y="468.1" font-size="9.8" font-weight="bold" textLength="6.3" lengthAdjust="spacingAndGlyphs">3</text><text x="196" y="484.8" font-size="9.8" font-weight="bold" textLength="6.3" lengthAdjust="spacingAndGlyphs">2</text><text x="196" y="501.5" font-size="9.8" font-weight="bold" textLength="6.3" lengthAdjust="spacingAndGlyphs">1</text>
<circle cx="90.7" cy="391.4" r="15.4" fill="#fff" stroke="#000" stroke-width="2"/><path transform="translate(90.7 392.0) scale(0.9 1)" d="M-7.2 6V7.6H-2.4V6.3C-5.3 4.6 -6.9 2 -6.9 -1.2C-6.9 -5.2 -4 -8 0 -8C4 -8 6.9 -5.2 6.9 -1.2C6.9 2 5.3 4.6 2.4 6.3V7.6H7.2V6" fill="none" stroke="#111" stroke-width="1.35"/><circle cx="57" cy="464.5" r="15.4" fill="#fff" stroke="#000" stroke-width="2"/><path transform="translate(57 465.1) scale(0.9 1)" d="M-7.2 6V7.6H-2.4V6.3C-5.3 4.6 -6.9 2 -6.9 -1.2C-6.9 -5.2 -4 -8 0 -8C4 -8 6.9 -5.2 6.9 -1.2C6.9 2 5.3 4.6 2.4 6.3V7.6H7.2V6" fill="none" stroke="#111" stroke-width="1.35"/><circle cx="102.7" cy="464.5" r="15.4" fill="#fff" stroke="#000" stroke-width="2"/><path transform="translate(102.7 465.1) scale(0.9 1)" d="M-7.2 6V7.6H-2.4V6.3C-5.3 4.6 -6.9 2 -6.9 -1.2C-6.9 -5.2 -4 -8 0 -8C4 -8 6.9 -5.2 6.9 -1.2C6.9 2 5.3 4.6 2.4 6.3V7.6H7.2V6" fill="none" stroke="#111" stroke-width="1.35"/><circle cx="271.8" cy="444.8" r="15.4" fill="#fff" stroke="#000" stroke-width="2"/><path transform="translate(271.8 445.40000000000003) scale(0.9 1)" d="M-7.2 6V7.6H-2.4V6.3C-5.3 4.6 -6.9 2 -6.9 -1.2C-6.9 -5.2 -4 -8 0 -8C4 -8 6.9 -5.2 6.9 -1.2C6.9 2 5.3 4.6 2.4 6.3V7.6H7.2V6" fill="none" stroke="#111" stroke-width="1.35"/><circle cx="327.6" cy="472.8" r="15.4" fill="#fff" stroke="#000" stroke-width="2"/><path transform="translate(327.6 473.40000000000003) scale(0.9 1)" d="M-7.2 6V7.6H-2.4V6.3C-5.3 4.6 -6.9 2 -6.9 -1.2C-6.9 -5.2 -4 -8 0 -8C4 -8 6.9 -5.2 6.9 -1.2C6.9 2 5.3 4.6 2.4 6.3V7.6H7.2V6" fill="none" stroke="#111" stroke-width="1.35"/><circle cx="370.2" cy="451.6" r="15.4" fill="#fff" stroke="#000" stroke-width="2"/><path transform="translate(370.2 452.20000000000005) scale(0.9 1)" d="M-7.2 6V7.6H-2.4V6.3C-5.3 4.6 -6.9 2 -6.9 -1.2C-6.9 -5.2 -4 -8 0 -8C4 -8 6.9 -5.2 6.9 -1.2C6.9 2 5.3 4.6 2.4 6.3V7.6H7.2V6" fill="none" stroke="#111" stroke-width="1.35"/>
<text x="236.2" y="537.6" font-size="6.3" fill="#222">AD29484</text>
</svg>
</div>

<div id="pane" class="abs"></div>
<div class="abs" style="left:1347.8px;top:62.6px;width:16.2px;height:601px;background:#f8f8f8"></div>
<div class="abs" style="left:1347.8px;top:62.4px;width:16px;height:15.6px;background:#f0f0f0;border-left:1px solid #fbfbfb;border-top:1px solid #fbfbfb"></div>
<div class="abs" style="left:1347.8px;top:77.8px;width:18.2px;height:1.2px;background:#6e6e6e"></div>
<svg class="abs" style="left:1352px;top:68px" width="9" height="5" viewBox="0 0 9 5"><path d="M0.4 4.6L4.5 0.4L8.6 4.6Z" fill="#8a8a8a"/></svg>
<div class="abs" style="left:1347.8px;top:648.2px;width:16px;height:15.8px;background:#f0f0f0;border-left:1px solid #fbfbfb;border-top:1px solid #fbfbfb;border-bottom:1px solid #8a8a8a"></div>
<svg class="abs" style="left:1352.4px;top:654.4px" width="9" height="5" viewBox="0 0 9 5"><path d="M0.4 0.4L4.5 4.6L8.6 0.4Z" fill="#8a8a8a"/></svg>

<div id="h1" class="abs">Accelerator pedal position (APP) sensor</div>
<div id="p1" class="abs">Component disconnected</div>
<div id="p2" class="abs">Fig. 29484</div>
<table id="t">
<colgroup><col style="width:68.5px"><col style="width:380px"><col style="width:158.5px"><col style="width:35px"></colgroup>
<tr><th>Terminals</th><th>Condition</th><th>Typical value</th><th>Note</th></tr>
<tr><td>1 &amp; 5</td><td class="c">-</td><td>2000 Ω approx.</td><td></td></tr>
<tr><td>2 &amp; 4</td><td class="c">-</td><td>1300 Ω approx.</td><td></td></tr>
<tr><td>1 &amp; 6</td><td>Accelerator pedal released</td><td>3000 Ω approx.</td><td></td></tr>
<tr><td>1 &amp; 6</td><td>Accelerator pedal fully depressed</td><td>2400 Ω approx.</td><td></td></tr>
<tr><td>2 &amp; 3</td><td>Accelerator pedal released</td><td>2100 Ω approx.</td><td></td></tr>
<tr><td>2 &amp; 3</td><td>Accelerator pedal fully depressed</td><td>1400 Ω approx.</td><td></td></tr>
<tr><td>3 &amp; 4</td><td>Accelerator pedal released</td><td>1300 Ω approx.</td><td></td></tr>
<tr><td>3 &amp; 4</td><td>Accelerator pedal fully depressed</td><td>2000 Ω approx.</td><td></td></tr>
<tr><td>5 &amp; 6</td><td>Accelerator pedal released</td><td>1300 Ω approx.</td><td></td></tr>
<tr><td>5 &amp; 6</td><td>Accelerator pedal fully depressed</td><td>1900 Ω approx.</td><td></td></tr>
</table>
<div id="bt" class="abs">
<div class="fb" style="left:311px"><svg width="38.4" height="40.5" viewBox="0 0 36 38" style="overflow:visible;left:9.8px;top:1.5px" font-family="Liberation Sans, sans-serif"><g transform="translate(-0.1 0.6)"><g transform="translate(3.4 3.2)" fill="#8e8e8e"><path d="M9.5 11.5C9 5.5 13 2.5 18 2.5C23.5 2.5 27 6 27 10.2C27 14 24.5 16 21.5 18.2C19.5 19.7 19.3 21 19.3 23.2H13.2C13 19.5 14 17.5 16.8 15.3C19.3 13.4 20.4 12.4 20.4 10.6C20.4 8.9 19.3 7.9 17.7 7.9C15.8 7.9 14.9 9.4 14.9 12Z"/><ellipse cx="16.2" cy="28.6" rx="3.6" ry="3.1"/></g><g fill="#00c9cc" stroke="#10106e" stroke-width="1.5" stroke-linejoin="round"><path d="M9.5 11.5C9 5.5 13 2.5 18 2.5C23.5 2.5 27 6 27 10.2C27 14 24.5 16 21.5 18.2C19.5 19.7 19.3 21 19.3 23.2H13.2C13 19.5 14 17.5 16.8 15.3C19.3 13.4 20.4 12.4 20.4 10.6C20.4 8.9 19.3 7.9 17.7 7.9C15.8 7.9 14.9 9.4 14.9 12Z"/><ellipse cx="16.2" cy="28.6" rx="3.4" ry="2.9"/></g><path d="M11.5 9.5C11.7 6.4 14.4 4.4 17.8 4.4" fill="none" stroke="#9af4f4" stroke-width="1.4"/></g></svg><b style="top:41.6px">F1</b></div>
<div class="fb" style="left:373px"><svg width="38.4" height="40.5" viewBox="0 0 36 38" style="overflow:visible;left:9.8px;top:1.5px" font-family="Liberation Sans, sans-serif"><path d="M17.5 31.6L20 33L36.2 22V19L31.2 17Z" fill="#6a6a6a"/><path d="M3.7 14.5L15.7 8.2L31.2 14.5L17.8 21.5Z" fill="#e6e6e6" stroke="#555" stroke-width="0.8"/><path d="M3.7 14.5L4.4 23.6L17.2 31.2L17.8 21.5Z" fill="#fbfbfb" stroke="#555" stroke-width="0.8"/><path d="M17.8 21.5L31.2 14.5V20.4L17.4 28.8Z" fill="#a9a9a9" stroke="#555" stroke-width="0.8"/><path d="M5 24.4L17.2 31.4L31.2 22.4V20.6L17.4 29L5 22.2Z" fill="#3c3c3c"/><path d="M15.7 11.7L22 2.5L30 6L23.4 15.9Z" fill="#fff" stroke="#777" stroke-width="0.7"/><path d="M21.6 5L27.6 7.6M20.4 6.8L26.4 9.4M19.2 8.6L25.2 11.2M18 10.4L24 13" stroke="#2030ff" stroke-width="1.1" stroke-dasharray="1.5 0.8"/><circle cx="10" cy="16" r="1.1" fill="#25c425"/><circle cx="12.2" cy="17" r="1" fill="#d07070"/><path d="M20 23L30 17.4" stroke="#d9d9d9" stroke-width="0.9"/></svg><b style="top:41.6px">F2</b></div>
<div class="fb dis" style="left:435px"><svg width="38.4" height="40.5" viewBox="0 0 36 38" style="overflow:visible;left:9.8px;top:1.5px" font-family="Liberation Sans, sans-serif"><g transform="translate(-1.8 -0.7)" fill="#f4f4f4" stroke="#a9a9a9" stroke-width="1"><rect x="3.6" y="3.4" width="22.4" height="15.4"/><rect x="4.8" y="4.6" width="20" height="13" fill="none" stroke="#d6d6d6" stroke-width="0.8"/><path d="M7 13V8.2H16.4M7 13L9 14" fill="none" stroke="#9d9d9d" stroke-width="1.3"/><circle cx="20" cy="8.6" r="2.4" fill="#eee"/><path d="M18.4 10.6L17.4 15.4H22.6L21.6 10.6" fill="#eee"/><rect x="13" y="15.6" width="23.4" height="16"/><rect x="14.2" y="16.8" width="21" height="13.6" fill="none" stroke="#d6d6d6" stroke-width="0.8"/><circle cx="21.4" cy="23" r="4" fill="#e9e9e9" stroke-dasharray="1.6 0.9"/><path d="M25 25.4L33.4 28.8M27 23L30 27.4" fill="none" stroke="#a2a2a2" stroke-width="1.6"/><path d="M22 13L30 19.6" stroke="#b2b2b2" stroke-width="1"/></g></svg><b style="top:41.6px">F3</b></div>
<div class="fb dis" style="left:497px"><svg width="38.4" height="40.5" viewBox="0 0 36 38" style="overflow:visible;left:9.8px;top:1.5px" font-family="Liberation Sans, sans-serif"><g transform="translate(-1.8 -0.7)" fill="#f4f4f4" stroke="#a9a9a9" stroke-width="1"><rect x="3.6" y="3.4" width="22.4" height="15.4"/><rect x="4.8" y="4.6" width="20" height="13" fill="none" stroke="#d6d6d6" stroke-width="0.8"/><path d="M7 13V8.2H16.4M7 13L9 14" fill="none" stroke="#9d9d9d" stroke-width="1.3"/><circle cx="20" cy="8.6" r="2.4" fill="#eee"/><path d="M18.4 10.6L17.4 15.4H22.6L21.6 10.6" fill="#eee"/><rect x="13" y="15.6" width="23.4" height="16"/><rect x="14.2" y="16.8" width="21" height="13.6" fill="none" stroke="#d6d6d6" stroke-width="0.8"/><path d="M16 25L20.4 20.4L25 23.6L28.6 22.4M22 27.6L27 28.4L33.6 26.2M26 19.6L30 21.4" fill="none" stroke="#a2a2a2" stroke-width="1.5" stroke-dasharray="2.4 1"/><path d="M22 13L30 19.6" stroke="#b2b2b2" stroke-width="1"/></g></svg><b style="top:41.6px">F4</b></div>
<div class="fb" style="left:559px"><svg width="38.4" height="40.5" viewBox="0 0 36 38" style="overflow:visible;left:9.8px;top:1.5px" font-family="Liberation Sans, sans-serif"><rect x="6" y="4.6" width="28.6" height="28.8" fill="#9b9b9b"/><rect x="4" y="2.8" width="28.8" height="28.8" fill="#cfcfcf" stroke="#8a8a8a" stroke-width="0.6"/><rect x="1.9" y="0.9" width="29" height="29.1" fill="#fff" stroke="#111" stroke-width="1.2"/><path d="M27.6 1.2V29.8" stroke="#555" stroke-width="0.9"/><path d="M6.4 6.4L9.4 2.8L12.4 6.4M16.8 6.4L19.8 2.8L22.8 6.4" fill="none" stroke="#222" stroke-width="1"/><path d="M7.6 6.8V9.4H16.6M7.6 25V22.8H23.6V6.8" fill="none" stroke="#222" stroke-width="1"/><path d="M10.4 11.4L7.6 12.9L10.4 14.4L7.6 15.9L10.4 17.4L7.6 18.9L10.4 20.4" fill="none" stroke="#222" stroke-width="1"/><path d="M16.2 13.2H20.8M16.2 18.2H20.8M18.5 13.2V18.2" stroke="#111" stroke-width="1.7"/><path d="M5.4 25.2H11L8.2 28.2ZM15.8 25.2H21.4L18.6 28.2Z" fill="#fff" stroke="#222" stroke-width="1"/></svg><b style="top:41.6px">F5</b></div>
<div class="fb" style="left:621px"><svg width="38.4" height="40.5" viewBox="0 0 36 38" style="overflow:visible;left:9.8px;top:1.5px" font-family="Liberation Sans, sans-serif"><path d="M5.8 3.8H27.4L32.8 8.4V19.6H14L11 16.6H5.8Z" fill="#9b9b9b"/><path d="M4 2H25.6L31 6.6V17.6H12.2L9.2 14.6H4Z" fill="#fff" stroke="#111" stroke-width="1.3"/><path d="M3 4.6V10.4" stroke="#111" stroke-width="1.8"/><path d="M13 15.6H30" stroke="#9b9b9b" stroke-width="1.2"/><circle cx="10.3" cy="6.9" r="2.3" fill="#000"/><circle cx="24" cy="11.2" r="2.3" fill="#000"/><path d="M10.3 7V22.4M24 11.4V22.4" stroke="#333" stroke-width="1.2"/><path d="M11.8 9V22M25.5 13V22" stroke="#a2a2a2" stroke-width="1"/><rect x="5.6" y="24" width="12.2" height="7.8" fill="#9b9b9b"/><rect x="20.4" y="24" width="11.4" height="7.8" fill="#9b9b9b"/><rect x="3.8" y="22.4" width="12.2" height="7.6" fill="#fff" stroke="#111" stroke-width="1"/><rect x="18.8" y="22.4" width="11.2" height="7.6" fill="#fff" stroke="#111" stroke-width="1"/><text x="9.9" y="28.7" font-size="6.2" font-weight="bold" text-anchor="middle">5</text><text x="24.4" y="28.7" font-size="6.2" font-weight="bold" text-anchor="middle">11</text></svg><b style="top:41.6px">F6</b></div>
<div class="fb" style="left:683px"><svg width="38.4" height="40.5" viewBox="0 0 36 38" style="overflow:visible;left:9.8px;top:1.5px" font-family="Liberation Sans, sans-serif"><path d="M23 18.6L36 26.6" stroke="#8e8e8e" stroke-width="3.4" stroke-linecap="round"/><circle cx="13.5" cy="12.4" r="8.5" fill="#fff" stroke="#111" stroke-width="1.3"/><path d="M0.9 12.4H34.6" stroke="#111" stroke-width="1"/><path d="M13.5 -0.3V4" stroke="#111" stroke-width="1"/><path d="M13.5 4V12.4M7.4 12.7H19" stroke="#000" stroke-width="2.3"/><path d="M8.5 13.1L28.3 32.8" stroke="#111" stroke-width="1.1"/><path d="M8.8 13.4L14 18.6" stroke="#000" stroke-width="2.2"/><path d="M22.4 16.8L35 24.4" stroke="#000" stroke-width="3" stroke-linecap="round"/><path d="M22.8 15.4L21.2 18.6" stroke="#e8e800" stroke-width="1.4"/><path d="M26 18.2L33 22.4" stroke="#777" stroke-width="0.8"/></svg><b style="top:41.6px">F7</b></div>
<div class="fb" style="left:745px"><svg width="38.4" height="40.5" viewBox="0 0 36 38" style="overflow:visible;left:9.8px;top:1.5px" font-family="Liberation Sans, sans-serif"><path d="M11 30L31 21.4L35.6 25.4L14 34Z" fill="#8e8e8e"/><path d="M1.8 14.5L16.6 7.5L21 23.4L12.4 30.7Z" fill="#fff" stroke="#111" stroke-width="1.1"/><path d="M16.6 7.5Q21 1.6 27.9 2.5L34.9 16.6L21 23.4Z" fill="#fff" stroke="#111" stroke-width="1.1"/><path d="M1.8 14.5L12.4 30.7M2.6 16.6L13.2 32M3.4 18.6L14 33.2" stroke="#111" stroke-width="0.9"/><path d="M12.4 30.7L21 23.4L34.9 16.6L35.4 19.4L22.4 26.4L14.4 33.4Z" fill="#fff" stroke="#111" stroke-width="1"/><path d="M17 28.6L22 24.8L27.4 22.4L27.8 24.2L22.6 26.8L18.4 30Z" fill="#ddd" stroke="#111" stroke-width="0.8"/><path d="M6.4 15.4L14.4 11.6M7.4 17.6L15.4 13.8M8.4 19.8L16.4 16M9.4 22L17.4 18.2M10.6 24.2L18.2 20.4M11.8 26.4L18.8 22.8" stroke="#8a8a8a" stroke-width="0.9" stroke-dasharray="2.6 0.8"/><path d="M20.4 8.2L27.6 5.4M21.4 10.4L28.6 7.6M22.4 12.6L29.6 9.8M23.4 14.8L30.6 12M24.4 17L31.6 14.2" stroke="#8a8a8a" stroke-width="0.9" stroke-dasharray="2.6 0.8"/></svg><b style="top:41.6px">F8</b></div>
<div class="fb" style="left:807px"><svg width="38.4" height="40.5" viewBox="0 0 36 38" style="overflow:visible;left:9.8px;top:1.5px" font-family="Liberation Sans, sans-serif"><rect x="0" y="-0.7" width="37.3" height="36.3" fill="#8d9bdc"/><path d="M0 35.6H37.3V-0.7" fill="none" stroke="#7582c4" stroke-width="1.2"/><rect x="5.2" y="3.1" width="10.6" height="9.2" fill="#4a3f8a"/><rect x="19.3" y="3.1" width="10.6" height="9.2" fill="#4a3f8a"/><rect x="4.2" y="2.1" width="10.4" height="8.8" fill="#ffee1a"/><rect x="18.3" y="2.1" width="10.4" height="8.8" fill="#ffee1a"/><text x="9.4" y="9.5" font-size="8.2" font-weight="bold" text-anchor="middle" fill="#222">2</text><text x="23.5" y="9.5" font-size="8.2" font-weight="bold" text-anchor="middle" fill="#222">3</text><rect x="5.2" y="15.5" width="24.8" height="17.2" fill="#4a3f8a"/><rect x="4.2" y="14.5" width="24.6" height="16.8" fill="#ffee1a"/><path d="M6.8 19.4L10.8 16.6L20.8 16.4L23.6 19L26.2 20.4V25.8L21.8 28.6L8.2 27.4L6.4 24Z" fill="#de5f3c"/><path d="M18.4 18.4L14.2 23.4H16.4L13.4 27.4" stroke="#fff" stroke-width="1.1" fill="none"/><path d="M5.4 19v1.4M5.4 22v1.4M5.4 25v1.4" stroke="#554" stroke-width="0.7"/></svg><b style="top:41.6px">F9</b></div>
<div class="fb" style="left:869px"><svg width="38.4" height="40.5" viewBox="0 0 36 38" style="overflow:visible;left:9.8px;top:1.5px" font-family="Liberation Sans, sans-serif"><path d="M22.6 19L35 26.6" stroke="#8e8e8e" stroke-width="3.2" stroke-linecap="round"/><path d="M14.6 1.8V30" stroke="#1a22ff" stroke-width="1.2"/><path d="M18.2 1.8V30" stroke="#ff1a1a" stroke-width="1.2"/><circle cx="12.5" cy="11.7" r="7.8" fill="#fff" stroke="#111" stroke-width="1.3"/><path d="M14.6 4.4V19" stroke="#1a22ff" stroke-width="1.6"/><path d="M18.2 6.6V16.8" stroke="#ff1a1a" stroke-width="1.5"/><path d="M7.8 7.6H12.4V11H7.8M7.8 9.3H12.4M7.8 13.2H12.4M7.8 13.2V16.2H10V13.2" fill="none" stroke="#1a22ff" stroke-width="1.5"/><path d="M3.2 8.8h1.4M3.2 15.4h1.4" stroke="#1a22ff" stroke-width="1"/><path d="M20.6 9.4h2M20.6 11.6h2M20.6 13.8h2" stroke="#ff1a1a" stroke-width="1"/><path d="M21.7 17.3L34.4 24.8" stroke="#000" stroke-width="2.8" stroke-linecap="round"/><path d="M21.4 16L20.2 18.6" stroke="#e8e800" stroke-width="1.2"/><path d="M25.6 19L32.4 23" stroke="#777" stroke-width="0.8"/></svg><b style="top:41.6px">F11</b></div>
<div class="fb" style="left:931px"><svg width="38.4" height="40.5" viewBox="0 0 36 38" style="overflow:visible;left:9.8px;top:1.5px" font-family="Liberation Sans, sans-serif"><rect x="15.4" y="4.6" width="19.6" height="27.4" fill="#8e8e8e"/><rect x="14" y="3.4" width="19.6" height="27.2" fill="#c9c9c9"/><rect x="12.8" y="2.1" width="19.6" height="27.2" fill="#fff" stroke="#7c7c7c" stroke-width="0.9"/><path d="M20 6.6H30.4M16 11.2H30.4M16 15.6H30.4M16 20H30.4" stroke="#b4b4b4" stroke-width="1.3"/><path d="M16 24.6H30.4" stroke="#8a8a8a" stroke-width="1.7"/><path d="M4.6 17.6L6.6 22.4L17 15.6L14.4 11.2Z" fill="#8e8e8e"/><path d="M2.2 14.5L12.1 8.9L14.9 13.1L5.1 20.1L2.4 19.4Z" fill="#f2f200" stroke="#b9b900" stroke-width="0.6"/><path d="M12.1 8.9L18.4 6.3L14.9 13.1Z" fill="#efefef" stroke="#6e6e6e" stroke-width="0.7"/><path d="M16.8 7L18.6 6.2L17.7 8.2Z" fill="#333"/></svg><b style="top:41.6px">Ctrl+F4</b></div>
<div class="fb" style="left:993px"><svg width="38.4" height="40.5" viewBox="0 0 36 38" style="overflow:visible;left:9.8px;top:1.5px" font-family="Liberation Sans, sans-serif"><rect x="-0.3" y="-1" width="37.3" height="36.6" fill="#fff"/><path d="M-0.3 -0.7H35.6" stroke="#2a2ad0" stroke-width="1.4"/><path d="M36.4 -1V35H-0.3" fill="none" stroke="#111" stroke-width="1.5"/><rect x="1.1" y="1.8" width="15.6" height="5.8" fill="#f3f3f3"/><path d="M16.8 1.8V7.8H1.1" fill="none" stroke="#111" stroke-width="1.4"/><path d="M4.5 4.8H13.1" stroke="#333" stroke-width="1" stroke-dasharray="1.6 0.7"/><rect x="18.7" y="1.8" width="15.6" height="5.8" fill="#f3f3f3"/><path d="M34.4 1.8V7.8H18.7" fill="none" stroke="#111" stroke-width="1.4"/><path d="M22.099999999999998 4.8H30.7" stroke="#333" stroke-width="1" stroke-dasharray="1.6 0.7"/><rect x="1.1" y="10.3" width="15.6" height="5.8" fill="#f3f3f3"/><path d="M16.8 10.3V16.3H1.1" fill="none" stroke="#111" stroke-width="1.4"/><path d="M4.5 13.3H13.1" stroke="#333" stroke-width="1" stroke-dasharray="1.6 0.7"/><rect x="18.7" y="10.3" width="15.6" height="5.8" fill="#f3f3f3"/><path d="M34.4 10.3V16.3H18.7" fill="none" stroke="#111" stroke-width="1.4"/><path d="M22.099999999999998 13.3H30.7" stroke="#333" stroke-width="1" stroke-dasharray="1.6 0.7"/><rect x="1.1" y="18.8" width="15.6" height="5.8" fill="#f3f3f3"/><path d="M16.8 18.8V24.8H1.1" fill="none" stroke="#111" stroke-width="1.4"/><path d="M4.5 21.8H13.1" stroke="#333" stroke-width="1" stroke-dasharray="1.6 0.7"/><rect x="18.7" y="18.8" width="15.6" height="5.8" fill="#f3f3f3"/><path d="M34.4 18.8V24.8H18.7" fill="none" stroke="#111" stroke-width="1.4"/><path d="M22.099999999999998 21.8H30.7" stroke="#333" stroke-width="1" stroke-dasharray="1.6 0.7"/><rect x="1.1" y="27.4" width="15.6" height="5.8" fill="#f3f3f3"/><path d="M16.8 27.4V33.4H1.1" fill="none" stroke="#111" stroke-width="1.4"/><path d="M4.5 30.4H13.1" stroke="#333" stroke-width="1" stroke-dasharray="1.6 0.7"/></svg><b style="top:42.8px">Ctrl+F8</b></div>

<div class="abs" style="left:0;top:59.8px;width:1366px;height:2.2px;background:#a4a4a4"></div>
<div class="abs" style="left:1364.4px;top:0;width:1.6px;height:62px;background:#b4b4b4"></div>
</div>
</div>
</body>
</html>
